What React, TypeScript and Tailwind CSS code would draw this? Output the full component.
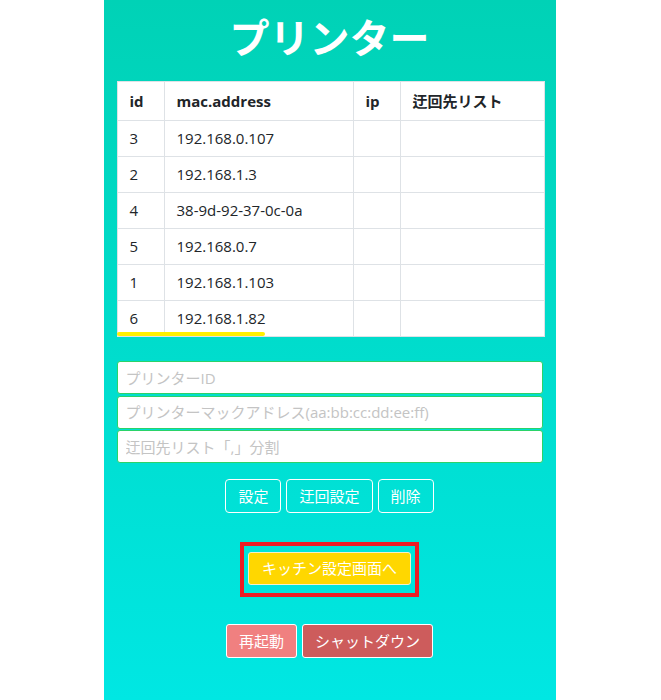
const rows = [
  { id: "3", mac: "192.168.0.107" },
  { id: "2", mac: "192.168.1.3" },
  { id: "4", mac: "38-9d-92-37-0c-0a" },
  { id: "5", mac: "192.168.0.7" },
  { id: "1", mac: "192.168.1.103" },
  { id: "6", mac: "192.168.1.82" },
];

const font = "font-['Open_Sans','Noto_Sans_CJK_JP',sans-serif]";

const App = () => {
  return (
    <div className={`min-h-[700px] w-full bg-white flex justify-center ${font}`}>
      <div className="w-[452px] min-h-[700px] -translate-x-px bg-gradient-to-b from-[#00d2b6] to-[#00e7e3] px-[13px] pb-10">
        <h1 className="h-[81px] pb-[6px] flex items-center justify-center text-white text-[40px] font-bold">
          プリンター
        </h1>

        <div className="relative">
          <table className="w-full border-collapse bg-white text-[15px] text-[#212529] table-fixed">
            <colgroup>
              <col className="w-[47px]" />
              <col className="w-[189px]" />
              <col className="w-[47px]" />
              <col className="w-[144px]" />
            </colgroup>
            <thead>
              <tr className="h-[39px]">
                <th className="border border-[#dee2e6] px-3 text-left font-bold">id</th>
                <th className="border border-[#dee2e6] px-3 text-left font-bold">mac.address</th>
                <th className="border border-[#dee2e6] px-3 text-left font-bold">ip</th>
                <th className="border border-[#dee2e6] px-3 text-left font-bold">迂回先リスト</th>
              </tr>
            </thead>
            <tbody>
              {rows.map((r) => (
                <tr key={r.id} className="h-[36px]">
                  <td className="border border-[#dee2e6] px-3">{r.id}</td>
                  <td className="border border-[#dee2e6] px-3">{r.mac}</td>
                  <td className="border border-[#dee2e6] px-3"></td>
                  <td className="border border-[#dee2e6] px-3"></td>
                </tr>
              ))}
            </tbody>
          </table>
          <div className="absolute left-0 bottom-[1px] w-[148px] h-[4px] rounded-full bg-[#fff000]" />
        </div>

        <div className="mt-[24px] flex flex-col gap-[1.5px]">
          <input
            className="h-[33px] w-full rounded-[3px] border border-[#2bd368] bg-white px-2 text-[15px] outline-none placeholder:text-[#c4c4c4]"
            placeholder="プリンターID"
          />
          <input
            className="h-[33px] w-full rounded-[3px] border border-[#2bd368] bg-white px-2 text-[15px] outline-none placeholder:text-[#c4c4c4]"
            placeholder="プリンターマックアドレス(aa:bb:cc:dd:ee:ff)"
          />
          <input
            className="h-[33px] w-full rounded-[3px] border border-[#2bd368] bg-white px-2 text-[15px] outline-none placeholder:text-[#c4c4c4]"
            placeholder="迂回先リスト「,」分割"
          />
        </div>

        <div className="mt-[16px] flex justify-center gap-[5px]">
          <button className="h-[34px] px-3 rounded-[4px] border border-white text-white text-[15px]">設定</button>
          <button className="h-[34px] px-3 rounded-[4px] border border-white text-white text-[15px]">迂回設定</button>
          <button className="h-[34px] px-3 rounded-[4px] border border-white text-white text-[15px]">削除</button>
        </div>

        <div className="mt-[29px] flex justify-center">
          <div className="border-4 border-[#ec1c24] px-[4px] pt-[6px] pb-[8px]">
            <button className="h-[33px] px-[13px] rounded-[3px] border border-[#f5f0c8] bg-[#ffd700] text-white text-[15px]">
              キッチン設定画面へ
            </button>
          </div>
        </div>

        <div className="mt-[27px] flex justify-center gap-[5px]">
          <button className="h-[34px] px-3 rounded-[3px] border border-white bg-[#f08080] text-white text-[15px]">再起動</button>
          <button className="h-[34px] px-3 rounded-[3px] border border-white bg-[#cd5c5c] text-white text-[15px]">シャットダウン</button>
        </div>
      </div>
    </div>
  );
};

export default App;
